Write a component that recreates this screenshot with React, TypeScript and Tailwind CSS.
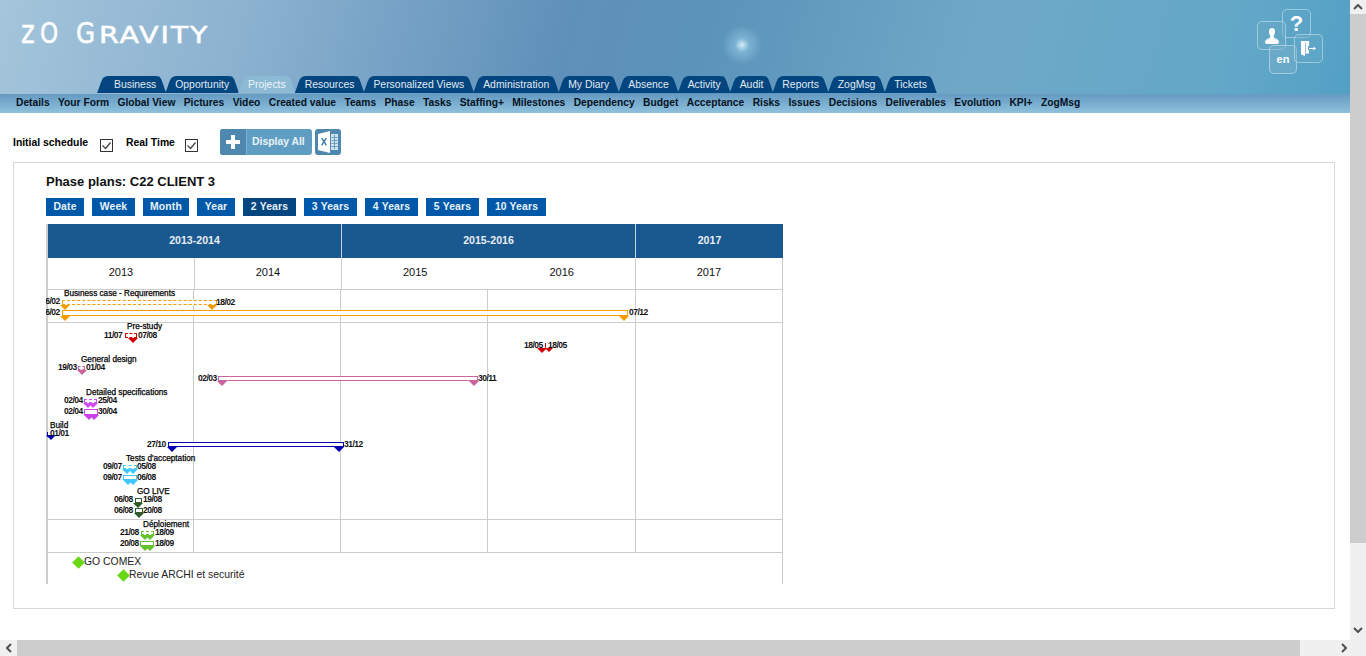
import React from "react";

const SANS = "[font-family:'Liberation_Sans',Arial,sans-serif]";
const topTabs = ["Business","Opportunity","Projects","Resources","Personalized Views","Administration","My Diary","Absence","Activity","Audit","Reports","ZogMsg","Tickets"];
const subTabs = ["Details","Your Form","Global View","Pictures","Video","Created value","Teams","Phase","Tasks","Staffing+","Milestones","Dependency","Budget","Acceptance","Risks","Issues","Decisions","Deliverables","Evolution","KPI+","ZogMsg"];
const ranges: [string, string][] = [["Date","w-[38px]"],["Week","w-[43px]"],["Month","w-[46px]"],["Year","w-[38px]"],["2 Years","w-[53px]"],["3 Years","w-[53px]"],["4 Years","w-[53px]"],["5 Years","w-[53px]"],["10 Years","w-[59px]"]];

const OX = 46, OY = 290;

type Bar = { x: number; y: number; w: number; h: number; c: string; dashed?: boolean; tris: number[]; ty: number; ts?: number };
const bars: Bar[] = [
  { x: 62, y: 300, w: 155, h: 5, c: "#f59c00", dashed: true, tris: [65, 212], ty: 305 },
  { x: 62, y: 310, w: 566, h: 6, c: "#f59c00", tris: [65, 624], ty: 316 },
  { x: 125, y: 333, w: 12, h: 5, c: "#d40000", dashed: true, tris: [133], ty: 338, ts: 5 },
  { x: 78, y: 366, w: 7, h: 4, c: "#c9649c", dashed: true, tris: [82], ty: 370 },
  { x: 218, y: 376, w: 260, h: 5, c: "#c9649c", tris: [222, 474], ty: 381 },
  { x: 84, y: 399, w: 13, h: 4, c: "#d54ff0", dashed: true, tris: [88, 93], ty: 403 },
  { x: 84, y: 409, w: 14, h: 6, c: "#c93fe8", tris: [89, 94], ty: 415 },
  { x: 168, y: 442, w: 176, h: 5, c: "#0000b0", tris: [172, 339], ty: 447 },
  { x: 123, y: 465, w: 14, h: 4, c: "#3fc8ff", dashed: true, tris: [127, 133], ty: 469 },
  { x: 123, y: 475, w: 14, h: 5, c: "#3fc8ff", tris: [128, 133], ty: 480 },
  { x: 135, y: 498, w: 7, h: 5, c: "#2f5c2f", tris: [138], ty: 503 },
  { x: 135, y: 508, w: 8, h: 5, c: "#2f5c2f", tris: [139], ty: 513 },
  { x: 141, y: 531, w: 13, h: 4, c: "#66c22e", dashed: true, tris: [145, 150], ty: 535 },
  { x: 140, y: 541, w: 14, h: 5, c: "#66c22e", tris: [145, 150], ty: 546 },
];

const dates: [string, number, number][] = [
  ["06/02", 41, 301], ["18/02", 216, 302], ["06/02", 41, 312], ["07/12", 629, 312],
  ["11/07", 104, 335], ["07/08", 138, 335], ["18/05", 524, 345], ["18/05", 548, 345],
  ["19/03", 58, 367], ["01/04", 86, 367], ["02/03", 198, 378], ["30/11", 478, 378],
  ["02/04", 64, 400], ["25/04", 98, 400], ["02/04", 64, 411], ["30/04", 98, 411],
  ["01/01", 50, 433], ["27/10", 147, 444], ["31/12", 344, 444],
  ["09/07", 103, 466], ["05/08", 137, 466], ["09/07", 103, 477], ["06/08", 137, 477],
  ["06/08", 114, 499], ["19/08", 143, 499], ["06/08", 114, 510], ["20/08", 143, 510],
  ["21/08", 120, 532], ["18/09", 155, 532], ["20/08", 120, 543], ["18/09", 155, 543],
];

const labels: [string, number, number][] = [
  ["Business case - Requirements", 64, 294], ["Pre-study", 127, 327], ["General design", 81, 360],
  ["Detailed specifications", 86, 393], ["Build", 50, 426], ["Tests d'acceptation", 126, 459],
  ["GO LIVE", 137, 492], ["Déploiement", 143, 525],
];

function Tri({ cx, y, c, s = 5 }: { cx: number; y: number; c: string; s?: number }) {
  return (
    <svg className="absolute" style={{ left: cx - s - OX, top: y - OY }} width={s * 2} height={s} viewBox={`0 0 ${s * 2} ${s}`}>
      <polygon points={`0,0 ${s * 2},0 ${s},${s}`} fill={c} />
    </svg>
  );
}

function Tab({ t }: { t: string }) {
  const active = t === "Projects";
  return (
    <div className={`relative -ml-[1px] h-[17px] pl-[10px] pr-[9.900px] text-[10.400px] leading-[17px] [letter-spacing:0.02px] ${active ? "bg-[#8cb9d4] text-[#eef6fa]" : "bg-[#03457f] text-[#e2ebf3]"} [clip-path:polygon(0_100%,2px_70%,4px_35%,6px_12%,9px_2%,12px_0,calc(100%-11px)_0,calc(100%-7px)_3%,calc(100%-5px)_18%,calc(100%-3px)_50%,calc(100%-1px)_85%,100%_100%)] first:ml-[0px] first:pl-[17px]`}>
      {t}
    </div>
  );
}

export default function App() {
  return (
    <div className={`flex h-[656px] w-[1366px] flex-col overflow-hidden bg-white text-black ${SANS}`}>
      <div className="flex min-h-0 flex-1">
        <main className="w-[1350px]">
          {/* Header */}
          <header className="relative h-[94px] bg-[radial-gradient(circle_at_742px_45px,rgba(215,242,253,0.95)_0,rgba(170,220,245,0.4)_7px,rgba(150,210,240,0)_20px),linear-gradient(105deg,#a4c5db_0%,#8cb2d0_18%,#5f90b9_42%,#5b93ba_52%,#6fa8c7_72%,#64a8c8_90%,#52a0c5_100%)] pt-[16px]">
            <div className="flex h-[32px] items-baseline pl-[21px] text-white [-webkit-text-stroke:0.5px_#fff] [font-family:'DejaVu_Sans',sans-serif] leading-[32px]">
              <span className="inline-block w-[19px] origin-left scale-x-[0.82] text-[32px]">z</span>
              <span className="inline-block w-[36px] origin-left scale-x-[0.8] text-[29px]">O</span>
              <span className="inline-block w-[23px] origin-left scale-x-[0.85] text-[29px]">G</span>
              <span className="inline-block origin-left scale-x-[1.24] text-[23px] tracking-[1.500px]">RAVITY</span>
            </div>
            <div className="absolute left-0 top-[76px] flex pl-[97px]">
              {topTabs.map((t) => <Tab key={t} t={t} />)}
            </div>
            <div className="absolute left-[1282px] top-[9px] flex h-[29px] w-[29px] items-center justify-center rounded-[5px] border border-white/40 text-[22px] font-bold leading-none text-white">?</div>
            <div className="absolute left-[1257px] top-[21px] flex h-[29px] w-[29px] items-center justify-center rounded-[5px] border border-white/40 bg-[#6fa9c8]/40">
              <svg width="14" height="16" viewBox="0 0 14 16"><path d="M7 0c2 0 3 1.500 3 3.500S9 7 8.600 8c0 1 .4 1.600 2 2.600 2 1 3.400 2 3.400 3.400 0 1-1 2-2 2H2c-1 0-2-1-2-2 0-1.400 1.400-2.400 3.400-3.400 1.600-1 2-1.600 2-2.600C5 7 4 5.500 4 3.500S5 0 7 0z" fill="#fff" /></svg>
            </div>
            <div className="absolute left-[1269px] top-[45px] flex h-[29px] w-[28px] items-center justify-center rounded-[5px] border border-white/40 bg-[#77afcc]/50 text-[11px] font-bold text-white">en</div>
            <div className="absolute left-[1294px] top-[34px] flex h-[29px] w-[29px] items-center justify-center rounded-[5px] border border-white/40 bg-[#6aa9c8]/40">
              <svg width="15" height="15" viewBox="0 0 15 15"><path d="M0 0h8v5H7v4h1v3.500H4V15L0 13.500z" fill="#fff" /><path d="M8 7h4.500V5.500l2.500 2-2.500 2V8H8z" fill="#fff" /><path d="M4.500 1.500v11M8.500 1v3" stroke="#7db2cf" strokeWidth="0.8" /></svg>
            </div>
          </header>

          {/* Sub menu */}
          <nav className="flex h-[19px] items-center gap-[8.400px] bg-[linear-gradient(#659ac2,#8fc1dc)] pl-[16px] text-[10.250px] font-bold leading-none text-[#06121e]">
            {subTabs.map((t, i) => <span key={i}>{t}</span>)}
          </nav>

          {/* Controls */}
          <div className="ml-[13px] mt-[16px] flex h-[26px] items-start text-[10.400px] font-bold">
            <span className="mt-[7px] w-[74px] whitespace-nowrap leading-[13px]">Initial schedule</span>
            <Check className="ml-[13px]" />
            <span className="ml-[13px] mt-[7px] w-[48px] whitespace-nowrap leading-[13px]">Real Time</span>
            <Check className="ml-[11px]" />
            <div className="ml-[22px] flex h-[26px] w-[92px] overflow-hidden rounded-[3px] bg-[#609dc3] text-[#eaf3f8]">
              <div className="flex w-[27px] items-center justify-center border-r border-[#7fb0cf] bg-[#4f88af]">
                <svg width="14" height="14" viewBox="0 0 14 14"><path d="M5 0h4v5h5v4H9v5H5V9H0V5h5z" fill="#fff" /></svg>
              </div>
              <span className="flex-1 pl-[5px] leading-[25px]">Display All</span>
            </div>
            <div className="ml-[3px] flex h-[26px] w-[26px] items-center justify-center rounded-[3px] bg-[#4f88af]">
              <svg width="20" height="22" viewBox="0 0 20 22">
                <path d="M0 3l12-3v22L0 19z" fill="#fff" />
                <path d="M13 3h7v16h-7z" fill="#cfe2ee" />
                <path d="M13.500 6.500h6M13.500 9.500h6M13.500 12.500h6M13.500 15.500h6M16.500 4v14" stroke="#6a9fc1" strokeWidth="1" />
                <path d="M3 7l2 3.500L3 14.500h1.600L6 11.800l1.400 2.700H9L7 10.500 9 7H7.400L6 9.300 4.600 7z" fill="#3f7fa8" />
              </svg>
            </div>
          </div>

          {/* Panel */}
          <section className="ml-[13px] mt-[7px] h-[447px] w-[1322px] border border-[#d6d6d6] pl-[32px] pt-[11px]">
            <h1 className="text-[13px] font-bold leading-[16px] text-[#111]">Phase plans: C22 CLIENT 3</h1>
            <div className="mt-[8px] flex gap-[8px]">
              {ranges.map(([r, w]) => (
                <button key={r} className={`h-[18px] text-center text-[10.400px] font-bold leading-[18px] text-[#e8f0f8] [letter-spacing:0.15px] ${w} ${r === "2 Years" ? "bg-[#03457f]" : "bg-[#0059a8]"}`}>{r}</button>
              ))}
            </div>

            {/* Gantt */}
            <div className="mt-[8px] w-[737px] border-l-2 border-[#cccccc]">
              <div className="flex h-[34px] bg-[#1a5890] text-center text-[10.600px] font-bold leading-[33px] text-[#e8eef4]">
                <div className="w-[294px] border-r border-[#c6d3df]">2013-2014</div>
                <div className="w-[294px] border-r border-[#c6d3df]">2015-2016</div>
                <div className="w-[147px]">2017</div>
              </div>
              <div className="flex h-[32px] border-b border-[#cccccc] text-center text-[11px] leading-[29px] text-[#111]">
                <div className="w-[147px] border-r border-[#cccccc]">2013</div>
                <div className="w-[147px] border-r border-[#cccccc]">2014</div>
                <div className="flex w-[294px] border-r border-[#cccccc]">
                  <div className="w-[147px]">2015</div>
                  <div className="w-[147px]">2016</div>
                </div>
                <div className="w-[147px] border-r border-[#cccccc]">2017</div>
              </div>

              <div className="relative -ml-[2px] w-[737px] overflow-hidden">
                <Row h={33} />
                <Row h={197} />
                <Row h={33} />
                <div className="h-[31px] w-[737px] border-l-2 border-r border-[#cccccc]" />

                <div className="absolute inset-0">
                  {bars.map((b, i) => (
                    <React.Fragment key={i}>
                      <div className={`absolute box-border border bg-white ${b.dashed ? "border-dashed" : "border-solid"}`} style={{ left: b.x - OX, top: b.y - OY, width: b.w, height: b.h, borderColor: b.c }} />
                      {b.tris.map((t, j) => <Tri key={j} cx={t} y={b.ty} c={b.c} s={b.ts ?? 5} />)}
                    </React.Fragment>
                  ))}
                  <Tri cx={542} y={348} c="#d40000" />
                  <Tri cx={549} y={348} c="#d40000" s={4} />
                  <div className="absolute left-[499px] top-[53px] h-[6px] w-[1px] bg-[#d40000]" />
                  <Tri cx={51} y={435} c="#0000b0" />
                  <div className="absolute left-[1px] top-[142px] h-[5px] w-[1px] bg-[#0000b0]" />

                  {labels.map(([t, x, y]) => (
                    <span key={t} className="absolute whitespace-nowrap text-[8.200px] leading-[10px] text-black [-webkit-text-stroke:0.25px_#000]" style={{ left: x - OX, top: y - OY - 5 }}>{t}</span>
                  ))}
                  {dates.map(([t, x, y], i) => (
                    <span key={i} className="absolute whitespace-nowrap text-[8.500px] font-bold leading-[10px] tracking-[-0.5px] text-[#111]" style={{ left: x - OX, top: y - OY - 5 }}>{t}</span>
                  ))}

                  <Milestone x={78} y={562} t="GO COMEX" />
                  <Milestone x={123} y={575} t="Revue ARCHI et securité" />
                </div>
              </div>
            </div>
          </section>
        </main>

        {/* Vertical scrollbar */}
        <aside className="flex w-[16px] flex-col bg-[#f0f0f0]">
          <div className="flex h-[14px] items-center justify-center">
            <Chevron d="M1 5l4-4 4 4" />
          </div>
          <div className="h-[529px] bg-[#cdcdcd]" />
          <div className="mt-auto flex h-[16px] items-center justify-center pb-[5px]">
            <Chevron d="M1 1l4 4 4-4" />
          </div>
        </aside>
      </div>

      {/* Horizontal scrollbar */}
      <div className="flex h-[16px] bg-[#f0f0f0]">
        <div className="flex w-[17px] items-center justify-center">
          <Chevron d="M5 1L1 5l4 4" box="0 0 6 10" w={6} h={10} />
        </div>
        <div className="w-[1283px] bg-[#cdcdcd]" />
        <div className="flex flex-1 items-center justify-end pr-[19px]">
          <Chevron d="M1 1l4 4-4 4" box="0 0 6 10" w={6} h={10} />
        </div>
      </div>
    </div>
  );
}

function Row({ h }: { h: number }) {
  return (
    <div className="grid w-[737px] grid-cols-[146px_147px_147px_148px_147px] border-b border-l-2 border-[#cccccc]" style={{ height: h }}>
      {[0, 1, 2, 3, 4].map((i) => <div key={i} className="border-r border-[#cccccc]" />)}
    </div>
  );
}

function Check({ className }: { className: string }) {
  return (
    <div className={`mt-[10px] flex h-[13px] w-[13px] items-center justify-center border border-[#333] bg-white ${className}`}>
      <svg width="11" height="11" viewBox="0 0 11 11"><path d="M1.500 5.500l3 3 5-6" fill="none" stroke="#444" strokeWidth="1.300" /></svg>
    </div>
  );
}

function Chevron({ d, box = "0 0 10 6", w = 10, h = 6 }: { d: string; box?: string; w?: number; h?: number }) {
  return <svg width={w} height={h} viewBox={box}><path d={d} fill="none" stroke="#505050" strokeWidth="2" /></svg>;
}

function Milestone({ x, y, t }: { x: number; y: number; t: string }) {
  return (
    <div className="absolute flex items-center" style={{ left: x - OX - 6, top: y - OY - 6 }}>
      <div className="flex h-[12px] w-[12px] items-center justify-center">
        <div className="h-[9px] w-[9px] rotate-45 bg-[#68d816]" />
      </div>
      <span className="whitespace-nowrap text-[10.400px] leading-[12px] text-[#222]">{t}</span>
    </div>
  );
}
